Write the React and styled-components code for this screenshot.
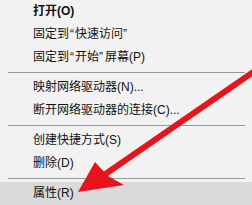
import React from 'react';
import styled, {createGlobalStyle} from "styled-components";

const GlobalStyle = createGlobalStyle`
    html, body {
        margin: 0;
        padding: 0;
        background: #f2f2f2;
        overflow: hidden;
    }
`
const Menu = styled.div`
    position: relative;
    width: 252px;
    height: 205px;
    display: flex;
    flex-direction: column;
    background-color: #f2f2f2;
    font-family: "Liberation Sans", "Noto Sans CJK SC", sans-serif;
    font-size: 12px;
    color: #111;
    overflow: hidden;
`
const Item = styled.div`
    height: 23px;
    line-height: 23px;
    padding-left: 33px;
    white-space: nowrap;
    font-weight: ${props => props.bold ? 700 : 400};
    background-color: ${props => props.active ? '#dadada' : 'transparent'};
`
/*кавычки в YaHei шире, чем в Liberation Sans*/
const Quote = styled.span`
    padding: 0 1px 0 ${props => props.close ? '0' : '1px'};
    padding-right: ${props => props.close ? '2px' : '1px'};
`
const Separator = styled.div`
    height: 7px;
    display: flex;
    align-items: flex-start;
    padding: 3px 7px 0 8px;
    box-sizing: border-box;
    &::after {
        content: "";
        flex: 1;
        height: 1px;
        background-color: #989898;
    }
`
const Arrow = styled.svg`
    position: absolute;
    left: 0;
    top: 0;
    pointer-events: none;
`

/*пункты меню, null - разделитель*/
const items = [
    {label: '打开(O)', bold: true},
    {label: ['固定到', '“', '快速访问', '”']},
    {label: ['固定到', '“', '开始', '”', '屏幕(P)']},
    null,
    {label: '映射网络驱动器(N)...'},
    {label: '断开网络驱动器的连接(C)...'},
    null,
    {label: '创建快捷方式(S)'},
    {label: '删除(D)'},
    null,
    {label: '属性(R)', active: true}
]

const renderLabel = (label) => {
    if (!Array.isArray(label)) {
        return label
    }
    return label.map((part, i) => {
        if (part === '“') return <Quote key={i}>{part}</Quote>
        if (part === '”') return <Quote key={i} close>{part}</Quote>
        return part
    })
}

const App = () => {
    return (
        <Menu>
            <GlobalStyle/>
            {
                items.map((item, i) => item
                    ? <Item key={i} bold={item.bold} active={item.active}>{renderLabel(item.label)}</Item>
                    : <Separator key={i}/>)
            }
            <Arrow width="252" height="205" viewBox="0 0 252 205">
                <line x1="104" y1="175" x2="262" y2="66" stroke="#e8141b" strokeWidth="6"/>
                <polygon points="78,192 95,162 108,176 124,185" fill="#e8141b"/>
            </Arrow>
        </Menu>
    )
}

export default App
